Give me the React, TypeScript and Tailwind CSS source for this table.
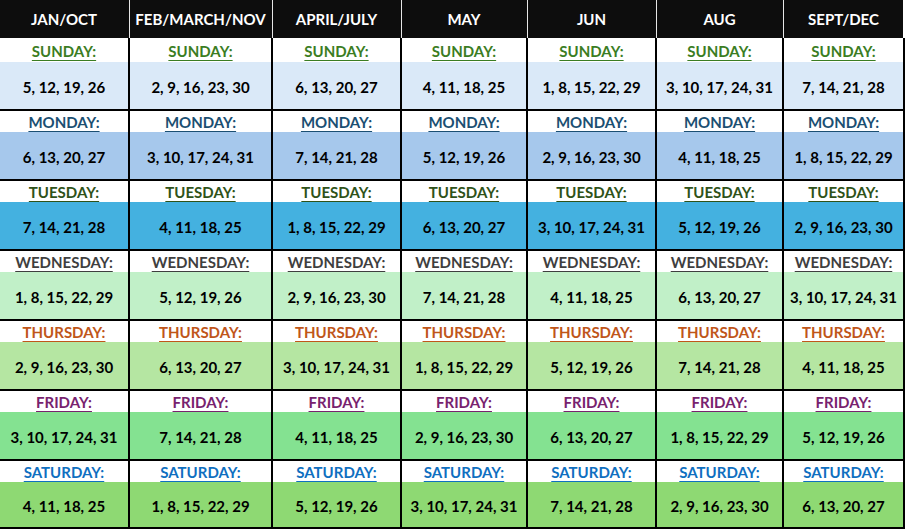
const months = ["JAN/OCT", "FEB/MARCH/NOV", "APRIL/JULY", "MAY", "JUN", "AUG", "SEPT/DEC"];

// column widths, each followed by a 2px rule
const widths = ["w-[128px]", "w-[141px]", "w-[127px]", "w-[124px]", "w-[127px]", "w-[125px]", "w-[119px]"];

const days = [
  {
    name: "SUNDAY:",
    text: "text-[#3b7d23] decoration-[#3b7d23]",
    bg: "bg-[#dae9f8]",
    labelH: "h-[24px]",
    dataH: "h-[47px]",
    dates: ["5, 12, 19, 26", "2, 9, 16, 23, 30", "6, 13, 20, 27", "4, 11, 18, 25", "1, 8, 15, 22, 29", "3, 10, 17, 24, 31", "7, 14, 21, 28"],
  },
  {
    name: "MONDAY:",
    text: "text-[#1b4f72] decoration-[#1b4f72]",
    bg: "bg-[#a6c8ec]",
    labelH: "h-[21px]",
    dataH: "h-[47px]",
    dates: ["6, 13, 20, 27", "3, 10, 17, 24, 31", "7, 14, 21, 28", "5, 12, 19, 26", "2, 9, 16, 23, 30", "4, 11, 18, 25", "1, 8, 15, 22, 29"],
  },
  {
    name: "TUESDAY:",
    text: "text-[#2f5219] decoration-[#2f5219]",
    bg: "bg-[#44b1e0]",
    labelH: "h-[21px]",
    dataH: "h-[47px]",
    dates: ["7, 14, 21, 28", "4, 11, 18, 25", "1, 8, 15, 22, 29", "6, 13, 20, 27", "3, 10, 17, 24, 31", "5, 12, 19, 26", "2, 9, 16, 23, 30"],
  },
  {
    name: "WEDNESDAY:",
    text: "text-[#3f3f3f] decoration-[#3f3f3f]",
    bg: "bg-[#c1f0c8]",
    labelH: "h-[21px]",
    dataH: "h-[47px]",
    dates: ["1, 8, 15, 22, 29", "5, 12, 19, 26", "2, 9, 16, 23, 30", "7, 14, 21, 28", "4, 11, 18, 25", "6, 13, 20, 27", "3, 10, 17, 24, 31"],
  },
  {
    name: "THURSDAY:",
    text: "text-[#c0561a] decoration-[#c0561a]",
    bg: "bg-[#b5e6a2]",
    labelH: "h-[21px]",
    dataH: "h-[47px]",
    dates: ["2, 9, 16, 23, 30", "6, 13, 20, 27", "3, 10, 17, 24, 31", "1, 8, 15, 22, 29", "5, 12, 19, 26", "7, 14, 21, 28", "4, 11, 18, 25"],
  },
  {
    name: "FRIDAY:",
    text: "text-[#78226e] decoration-[#78226e]",
    bg: "bg-[#84e291]",
    labelH: "h-[21px]",
    dataH: "h-[47px]",
    dates: ["3, 10, 17, 24, 31", "7, 14, 21, 28", "4, 11, 18, 25", "2, 9, 16, 23, 30", "6, 13, 20, 27", "1, 8, 15, 22, 29", "5, 12, 19, 26"],
  },
  {
    name: "SATURDAY:",
    text: "text-[#0f6fc0] decoration-[#0f6fc0]",
    bg: "bg-[#8ed973]",
    labelH: "h-[21px]",
    dataH: "h-[45px]",
    dates: ["4, 11, 18, 25", "1, 8, 15, 22, 29", "5, 12, 19, 26", "3, 10, 17, 24, 31", "7, 14, 21, 28", "2, 9, 16, 23, 30", "6, 13, 20, 27"],
  },
];

export default function App() {
  return (
    <div className="w-[906px] h-[531px] bg-white font-['Lato',sans-serif] font-bold leading-none overflow-hidden">
      <div className="w-[905px] flex flex-col">
        {/* Header */}
        <div className="flex h-[38px] w-[903px] bg-[#0d0d0d] text-white text-[15px]">
          {months.map((m, i) => (
            <div key={m} className="flex">
              <div className={`${widths[i]} flex items-center justify-center pt-px`}>{m}</div>
              {i < months.length - 1 && (
                <div className="w-[2px] flex justify-center">
                  <div className="w-px bg-[#e6e6e6]" />
                </div>
              )}
            </div>
          ))}
        </div>

        {days.map((d) => (
          <div key={d.name} className="flex flex-col">
            {/* day label row */}
            <div className={`flex ${d.labelH} bg-white`}>
              {widths.map((w, i) => (
                <div key={i} className="flex">
                  <div className={`${w} flex items-center justify-center pt-[2px]`}>
                    <span className={`text-[15px] underline decoration-1 underline-offset-[3px] ${d.text}`}>{d.name}</span>
                  </div>
                  <div className="w-[2px] bg-black" />
                </div>
              ))}
            </div>

            {/* dates row */}
            <div className={`flex ${d.dataH}`}>
              {widths.map((w, i) => (
                <div key={i} className="flex">
                  <div className={`${w} ${d.bg} flex items-center justify-center pt-[3px] text-[15px] text-black`}>
                    {d.dates[i]}
                  </div>
                  <div className="w-[2px] bg-black" />
                </div>
              ))}
            </div>

            <div className="h-[2px] bg-black" />
          </div>
        ))}
      </div>
    </div>
  );
}
